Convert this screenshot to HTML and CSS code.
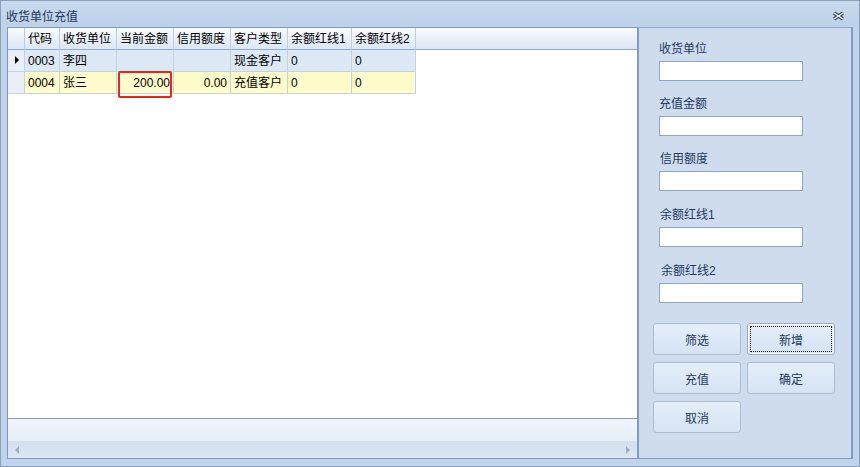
FILE: index.html
```html
<html lang="zh-CN">
<head>
    <meta charset="utf-8">
    <link rel="stylesheet" href="styles.css">
</head>
<body>
<div class="window">
    <div class="titlebar">
        <span class="title">收货单位充值</span>
        <svg class="close" width="13" height="10" viewBox="0 0 13 10">
            <path d="M2 2 L11 8 M11 2 L2 8" stroke="#2e405a" stroke-width="3.4" fill="none"/>
            <path d="M2 2 L11 8 M11 2 L2 8" stroke="#fff" stroke-width="1.3" fill="none"/>
        </svg>
    </div>
    <div class="main">
        <div class="grid">
            <div class="grid-view">
                <table class="data">
                    <thead>
                        <tr>
                            <th class="ind"></th>
                            <th class="c-code">代码</th>
                            <th class="c-mid">收货单位</th>
                            <th class="c-mid">当前金额</th>
                            <th class="c-mid">信用额度</th>
                            <th class="c-mid">客户类型</th>
                            <th class="c-wide">余额红线1</th>
                            <th class="c-wide">余额红线2</th>
                        </tr>
                    </thead>
                    <tbody>
                        <tr class="current">
                            <td class="ind"><i class="pointer"></i></td>
                            <td>0003</td>
                            <td>李四</td>
                            <td class="num"></td>
                            <td class="num"></td>
                            <td>现金客户</td>
                            <td>0</td>
                            <td>0</td>
                        </tr>
                        <tr class="even">
                            <td class="ind"></td>
                            <td>0004</td>
                            <td>张三</td>
                            <td class="num mark-cell">200.00<span class="mark"></span></td>
                            <td class="num">0.00</td>
                            <td>充值客户</td>
                            <td>0</td>
                            <td>0</td>
                        </tr>
                    </tbody>
                </table>
            </div>
            <div class="grid-footer"></div>
            <div class="hscroll">
                <span class="arrow-left"></span>
                <span class="arrow-right"></span>
            </div>
        </div>
        <div class="side">
            <div class="field">
                <label>收货单位</label>
                <input type="text">
            </div>
            <div class="field">
                <label>充值金额</label>
                <input type="text">
            </div>
            <div class="field tall">
                <label class="shift1">信用额度</label>
                <input type="text">
            </div>
            <div class="field tall">
                <label class="shift1">余额红线1</label>
                <input type="text">
            </div>
            <div class="field">
                <label class="shift2">余额红线2</label>
                <input type="text">
            </div>
            <div class="buttons">
                <button>筛选</button>
                <button class="focus">新增</button>
                <button>充值</button>
                <button>确定</button>
                <button>取消</button>
            </div>
        </div>
    </div>
</div>
</body>
</html>
```

FILE: styles.css
```css
* {
    margin: 0;
    padding: 0;
    box-sizing: border-box;
}
body {
    font: 12px "Liberation Sans", "Noto Sans CJK SC", sans-serif;
    color: #000;
}
.window {
    width: 860px;
    height: 467px;
    border: 1px solid #8c9fb8;
    background: #bfd3ea;
    display: flex;
    flex-direction: column;
}
.titlebar {
    height: 26px;
    display: flex;
    align-items: center;
    justify-content: space-between;
    padding: 3px 14px 0 5px;
    background: linear-gradient(#c8daef, #bdd1e9);
    color: #1d3556;
}
.title {
    font-size: 12px;
}
.main {
    flex: 1;
    display: flex;
    padding: 0 6px 7px 6px;
}

/* grid */
.grid {
    width: 631px;
    display: flex;
    flex-direction: column;
    border: 1px solid #7f9bc2;
    background: #fff;
}
.grid-view {
    height: 390px;
    background: linear-gradient(#f8fbfe 0, #dbe6f4 21px, #93acce 21px, #93acce 22px, #fff 22px);
}
.data {
    width: 408px;
    table-layout: fixed;
    border-collapse: separate;
    border-spacing: 0;
    font: 12px "Liberation Sans", "Noto Sans CJK SC", sans-serif;
    color: #000;
}
.data th, .data td {
    box-sizing: border-box;
    height: 22px;
    line-height: 20px;
    padding: 1px 2px 0 3px;
    border-right: 1px solid #c3d2e5;
    border-bottom: 1px solid #c3d2e5;
    text-align: left;
    font-weight: normal;
    white-space: nowrap;
    overflow: visible;
}
.data th {
    border-right-color: #bfcde0;
    border-bottom-color: #93acce;
}
.data .ind { width: 17px; padding: 0 0 0 7px; }
.data .c-code { width: 35px; }
.data .c-mid { width: 57px; }
.data .c-wide { width: 64px; }
.data td.ind { background: #e8eff8; }
.data .num { text-align: right; padding-right: 3px; }
.current td { background: #dde8f5; }
.even td { background: #fefbca; }
.pointer {
    display: inline-block;
    vertical-align: middle;
    border-left: 4px solid #000;
    border-top: 4px solid transparent;
    border-bottom: 4px solid transparent;
    margin-top: -1px;
}
.mark-cell {
    position: relative;
}
.mark {
    position: absolute;
    left: 1px;
    top: -1px;
    width: 54px;
    height: 27px;
    border: 2px solid #e8261c;
    border-radius: 2px;
}
.grid-footer {
    height: 23px;
    border-top: 1px solid #7f9bc2;
    background: linear-gradient(#eef4fb, #e5eef9);
}
.hscroll {
    height: 17px;
    display: flex;
    align-items: center;
    justify-content: space-between;
    padding: 0 7px;
    background: linear-gradient(#d2dfee, #dce6f2);
}
.arrow-left, .arrow-right {
    width: 0;
    height: 0;
    border-top: 4px solid transparent;
    border-bottom: 4px solid transparent;
}
.arrow-left { border-right: 4px solid #9cadc3; }
.arrow-right { border-left: 4px solid #9cadc3; }

/* side panel */
.side {
    width: 215px;
    border: 1px solid #8ea8ca;
    border-left-color: #7f9bc2;
    border-right: 2px solid #7f9bc2;
    border-bottom-color: #7f9bc2;
    background: #cfdcee;
    padding-top: 14px;
}
.field {
    padding-left: 20px;
    margin-bottom: 16px;
}
.field.tall {
    margin-bottom: 17px;
}
.field label {
    display: block;
    line-height: 14px;
    margin-bottom: 5px;
    color: #1e3a5f;
}
.field label.shift1 { padding-left: 1px; }
.field label.shift2 { padding-left: 2px; }
.field input {
    display: block;
    width: 144px;
    height: 20px;
    border: 1px solid #8ea7c6;
    background: #fff;
    outline: none;
}
.buttons {
    display: grid;
    grid-template-columns: 88px 88px;
    column-gap: 6px;
    row-gap: 7px;
    padding-left: 14px;
    margin-top: 20px;
}
.buttons button {
    height: 32px;
    border: 1px solid #abbdd5;
    border-radius: 3px;
    background: linear-gradient(#e5effb, #d5e3f3);
    color: #1e3a5f;
    font: 12px "Liberation Sans", "Noto Sans CJK SC", sans-serif;
}
.buttons button.focus {
    border-color: #98a9c0;
    box-shadow: inset 0 0 0 1px #fff;
    outline: 1px dotted #1a1a1a;
    outline-offset: -4px;
}
```
